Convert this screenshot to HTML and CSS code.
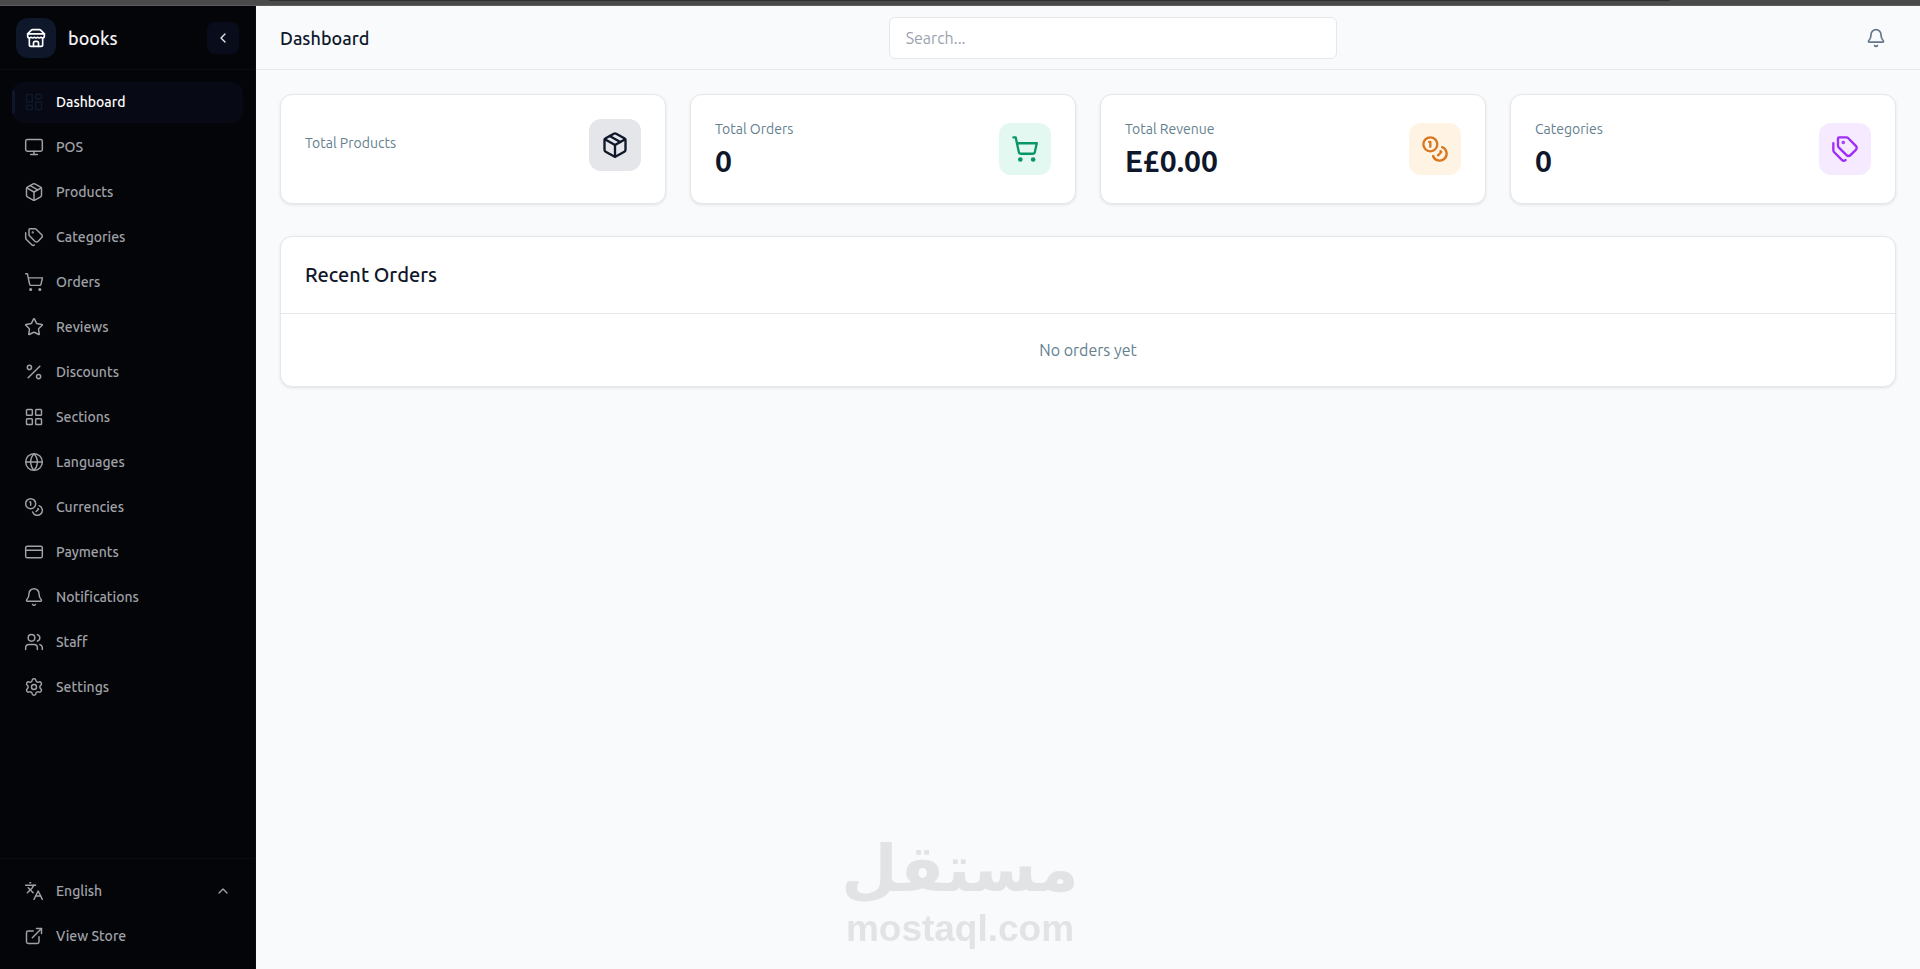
FILE: index.html
```html
<!DOCTYPE html>
<html lang="en">
<head>
    <meta charset="UTF-8">
    <meta name="viewport" content="width=device-width, initial-scale=1.0">
    <title>Dashboard - books</title>
    <link rel="stylesheet" href="styles.css">
</head>
<body>

    <!-- Shared icons -->
    <svg class="sprite" aria-hidden="true">
        <symbol id="box" viewBox="0 0 24 24"><path d="M11 21.73a2 2 0 0 0 2 0l7-4A2 2 0 0 0 21 16V8a2 2 0 0 0-1-1.73l-7-4a2 2 0 0 0-2 0l-7 4A2 2 0 0 0 3 8v8a2 2 0 0 0 1 1.73z"/><path d="M12 22V12"/><path d="M3.3 7 12 12l8.7-5"/><path d="m7.5 4.27 9 5.15"/></symbol>
        <symbol id="tags" viewBox="0 0 24 24"><path d="M13.172 2a2 2 0 0 1 1.414.586l6.71 6.71a2.4 2.4 0 0 1 0 3.408l-4.592 4.592a2.4 2.4 0 0 1-3.408 0l-6.71-6.71A2 2 0 0 1 6 9.172V3a1 1 0 0 1 1-1z"/><path d="M2 7v6.172a2 2 0 0 0 .586 1.414l6.71 6.71a2.4 2.4 0 0 0 3.191.193"/><circle cx="10.5" cy="6.5" r=".5" fill="currentColor"/></symbol>
        <symbol id="cart" viewBox="0 0 24 24"><circle cx="8" cy="21" r="1"/><circle cx="19" cy="21" r="1"/><path d="M2.05 2.05h2l2.66 12.42a2 2 0 0 0 2 1.58h9.78a2 2 0 0 0 1.95-1.57l1.65-7.43H5.12"/></symbol>
        <symbol id="coins" viewBox="0 0 24 24"><circle cx="8" cy="8" r="6"/><path d="M18.09 10.37A6 6 0 1 1 10.34 18"/><path d="M7 6h1v4"/><path d="m16.71 13.88.7.71-2.82 2.82"/></symbol>
        <symbol id="bell" viewBox="0 0 24 24"><path d="M10.268 21a2 2 0 0 0 3.464 0"/><path d="M3.262 15.326A1 1 0 0 0 4 17h16a1 1 0 0 0 .74-1.673C19.41 13.956 18 12.499 18 8A6 6 0 0 0 6 8c0 4.499-1.411 5.956-2.738 7.326"/></symbol>
    </svg>

    <div class="window-bar"><div class="window-line"></div></div>

    <div class="layout">
        <aside class="sidebar">
            <div class="brand">
                <span class="brand-logo">
                    <svg class="icon" viewBox="0 0 24 24"><path d="m2 7 4.41-4.41A2 2 0 0 1 7.83 2h8.34a2 2 0 0 1 1.42.59L22 7"/><path d="M4 12v8a2 2 0 0 0 2 2h12a2 2 0 0 0 2-2v-8"/><path d="M15 22v-4a2 2 0 0 0-2-2h-2a2 2 0 0 0-2 2v4"/><path d="M2 7h20"/><path d="M22 7v3a2 2 0 0 1-2 2a2.7 2.7 0 0 1-1.59-.63.7.7 0 0 0-.82 0A2.7 2.7 0 0 1 16 12a2.7 2.7 0 0 1-1.59-.63.7.7 0 0 0-.82 0A2.7 2.7 0 0 1 12 12a2.7 2.7 0 0 1-1.59-.63.7.7 0 0 0-.82 0A2.7 2.7 0 0 1 8 12a2.7 2.7 0 0 1-1.59-.63.7.7 0 0 0-.82 0A2.7 2.7 0 0 1 4 12a2 2 0 0 1-2-2V7"/></svg>
                </span>
                <span class="brand-name">books</span>
                <button class="collapse" aria-label="Collapse sidebar">
                    <svg class="icon icon-sm" viewBox="0 0 24 24"><path d="m15 18-6-6 6-6"/></svg>
                </button>
            </div>

            <nav class="nav">
                <a href="#" class="active">
                    <svg class="icon" viewBox="0 0 24 24"><rect x="3" y="3" width="7" height="9" rx="1"/><rect x="14" y="3" width="7" height="5" rx="1"/><rect x="14" y="12" width="7" height="9" rx="1"/><rect x="3" y="16" width="7" height="5" rx="1"/></svg>
                    Dashboard
                </a>
                <a href="#">
                    <svg class="icon" viewBox="0 0 24 24"><rect x="2" y="3" width="20" height="14" rx="2"/><path d="M8 21h8"/><path d="M12 17v4"/></svg>
                    POS
                </a>
                <a href="#"><svg class="icon"><use href="#box"/></svg>Products</a>
                <a href="#"><svg class="icon"><use href="#tags"/></svg>Categories</a>
                <a href="#"><svg class="icon"><use href="#cart"/></svg>Orders</a>
                <a href="#">
                    <svg class="icon" viewBox="0 0 24 24"><path d="M11.525 2.295a.53.53 0 0 1 .95 0l2.31 4.679a2.123 2.123 0 0 0 1.595 1.16l5.166.756a.53.53 0 0 1 .294.904l-3.736 3.638a2.123 2.123 0 0 0-.611 1.878l.882 5.14a.53.53 0 0 1-.771.56l-4.618-2.428a2.122 2.122 0 0 0-1.973 0L6.396 21.01a.53.53 0 0 1-.77-.56l.881-5.139a2.122 2.122 0 0 0-.611-1.879L2.16 9.795a.53.53 0 0 1 .294-.906l5.165-.755a2.122 2.122 0 0 0 1.597-1.16z"/></svg>
                    Reviews
                </a>
                <a href="#">
                    <svg class="icon" viewBox="0 0 24 24"><path d="M19 5 5 19"/><circle cx="6.5" cy="6.5" r="2.5"/><circle cx="17.5" cy="17.5" r="2.5"/></svg>
                    Discounts
                </a>
                <a href="#">
                    <svg class="icon" viewBox="0 0 24 24"><rect x="3" y="3" width="7" height="7" rx="1"/><rect x="14" y="3" width="7" height="7" rx="1"/><rect x="14" y="14" width="7" height="7" rx="1"/><rect x="3" y="14" width="7" height="7" rx="1"/></svg>
                    Sections
                </a>
                <a href="#">
                    <svg class="icon" viewBox="0 0 24 24"><circle cx="12" cy="12" r="10"/><path d="M12 2a14.5 14.5 0 0 0 0 20 14.5 14.5 0 0 0 0-20"/><path d="M2 12h20"/></svg>
                    Languages
                </a>
                <a href="#"><svg class="icon"><use href="#coins"/></svg>Currencies</a>
                <a href="#">
                    <svg class="icon" viewBox="0 0 24 24"><rect x="2" y="5" width="20" height="14" rx="2"/><path d="M2 10h20"/></svg>
                    Payments
                </a>
                <a href="#"><svg class="icon"><use href="#bell"/></svg>Notifications</a>
                <a href="#">
                    <svg class="icon" viewBox="0 0 24 24"><path d="M16 21v-2a4 4 0 0 0-4-4H6a4 4 0 0 0-4 4v2"/><circle cx="9" cy="7" r="4"/><path d="M22 21v-2a4 4 0 0 0-3-3.87"/><path d="M16 3.13a4 4 0 0 1 0 7.75"/></svg>
                    Staff
                </a>
                <a href="#">
                    <svg class="icon" viewBox="0 0 24 24"><path d="M9.671 4.136a2.34 2.34 0 0 1 4.659 0 2.34 2.34 0 0 0 3.319 1.915 2.34 2.34 0 0 1 2.33 4.033 2.34 2.34 0 0 0 0 3.831 2.34 2.34 0 0 1-2.33 4.033 2.34 2.34 0 0 0-3.319 1.915 2.34 2.34 0 0 1-4.659 0 2.34 2.34 0 0 0-3.32-1.915 2.34 2.34 0 0 1-2.33-4.033 2.34 2.34 0 0 0 0-3.831A2.34 2.34 0 0 1 6.35 6.051a2.34 2.34 0 0 0 3.319-1.915"/><circle cx="12" cy="12" r="3"/></svg>
                    Settings
                </a>
            </nav>

            <div class="nav nav-bottom">
                <button>
                    <svg class="icon" viewBox="0 0 24 24"><path d="m5 8 6 6"/><path d="m4 14 6-6 2-3"/><path d="M2 5h12"/><path d="M7 2h1"/><path d="m22 22-5-10-5 10"/><path d="M14 18h6"/></svg>
                    English
                    <svg class="icon icon-sm chevron" viewBox="0 0 24 24"><path d="m18 15-6-6-6 6"/></svg>
                </button>
                <a href="#">
                    <svg class="icon" viewBox="0 0 24 24"><path d="M15 3h6v6"/><path d="M10 14 21 3"/><path d="M18 13v6a2 2 0 0 1-2 2H5a2 2 0 0 1-2-2V8a2 2 0 0 1 2-2h6"/></svg>
                    View Store
                </a>
            </div>
        </aside>

        <div class="page">
            <header class="topbar">
                <h1>Dashboard</h1>
                <input type="search" class="search" placeholder="Search..." aria-label="Search">
                <button class="bell" aria-label="Notifications">
                    <svg class="icon"><use href="#bell"/></svg>
                </button>
            </header>

            <main class="content">
                <section class="stats">
                    <div class="card stat">
                        <div>
                            <p class="label">Total Products</p>
                        </div>
                        <span class="stat-icon dark"><svg class="icon"><use href="#box"/></svg></span>
                    </div>
                    <div class="card stat">
                        <div>
                            <p class="label">Total Orders</p>
                            <p class="value">0</p>
                        </div>
                        <span class="stat-icon green"><svg class="icon"><use href="#cart"/></svg></span>
                    </div>
                    <div class="card stat">
                        <div>
                            <p class="label">Total Revenue</p>
                            <p class="value">E£0.00</p>
                        </div>
                        <span class="stat-icon orange"><svg class="icon"><use href="#coins"/></svg></span>
                    </div>
                    <div class="card stat">
                        <div>
                            <p class="label">Categories</p>
                            <p class="value">0</p>
                        </div>
                        <span class="stat-icon purple"><svg class="icon"><use href="#tags"/></svg></span>
                    </div>
                </section>

                <section class="card orders">
                    <h2>Recent Orders</h2>
                    <p class="empty">No orders yet</p>
                </section>
            </main>
        </div>
    </div>

    <!-- Watermark over the page -->
    <div class="watermark">
        <span class="watermark-ar" lang="ar" dir="rtl">مستقل</span>
        <span class="watermark-en">mostaql.com</span>
    </div>

</body>
</html>
```
FILE: styles.css
```css
* {
    box-sizing: border-box;
}
body {
    margin: 0;
    min-height: 100vh;
    display: flex;
    flex-direction: column;
    background: #f9fafc;
    color: #0f172a;
    font-family: Ubuntu, "Open Sans", "Noto Sans", sans-serif;
    font-size: 16px;
    line-height: 24px;
}
h1, h2, p {
    margin: 0;
}
button {
    font: inherit;
    border: none;
    cursor: pointer;
}
.sprite {
    display: none;
}
.icon {
    width: 20px;
    height: 20px;
    flex-shrink: 0;
    fill: none;
    stroke: currentColor;
    stroke-width: 2;
    stroke-linecap: round;
    stroke-linejoin: round;
}
.icon-sm {
    width: 16px;
    height: 16px;
}
.window-bar {
    height: 6px;
    background: #4a4a4a;
    border-bottom: 1px solid #5c5c5c;
}
.window-line {
    height: 1px;
    width: 73%;
    margin-left: 14%;
    background: #303030;
}
.layout {
    flex: 1;
    display: flex;
}

/* Sidebar */
.sidebar {
    width: 256px;
    flex-shrink: 0;
    display: flex;
    flex-direction: column;
    background: #040509;
    border-right: 1px solid #0a0c14;
    color: #a0a2a8;
}
.brand {
    height: 64px;
    display: flex;
    align-items: center;
    gap: 12px;
    padding: 0 16px;
    border-bottom: 1px solid #0a0c14;
}
.brand-logo {
    width: 40px;
    height: 40px;
    display: flex;
    align-items: center;
    justify-content: center;
    background: #0f172a;
    color: white;
    border-radius: 12px;
}
.brand-name {
    flex: 1;
    color: #f1f2f4;
    font-size: 18px;
    font-weight: 550;
}
.collapse {
    width: 32px;
    height: 32px;
    display: flex;
    align-items: center;
    justify-content: center;
    padding: 0;
    background: #090d1b;
    color: #e5e7eb;
    border-radius: 8px;
}
.nav {
    flex: 1;
    display: flex;
    flex-direction: column;
    gap: 4px;
    padding: 12px;
}
.nav a,
.nav button {
    position: relative;
    display: flex;
    align-items: center;
    gap: 12px;
    padding: 10px 12px 11px;
    background: none;
    color: inherit;
    border-radius: 12px;
    font-size: 14px;
    font-weight: 500;
    line-height: 20px;
    text-decoration: none;
}
.nav .icon {
    stroke-width: 1.75;
}
.nav a.active {
    background: #070a14;
    color: white;
}
.nav a.active::before {
    content: "";
    position: absolute;
    left: 0;
    width: 3px;
    height: 24px;
    background: #0f172a;
    border-radius: 0 3px 3px 0;
}
.nav a.active .icon {
    color: #0f172a;
}
.nav-bottom {
    flex: none;
    border-top: 1px solid #0a0c14;
}
.nav .chevron {
    margin-left: auto;
    stroke-width: 2;
}

/* Header */
.page {
    flex: 1;
    min-width: 0;
}
.topbar {
    height: 64px;
    display: flex;
    align-items: center;
    justify-content: space-between;
    gap: 16px;
    padding: 0 24px;
    border-bottom: 1px solid #e5e7eb;
}
.topbar h1 {
    font-size: 18px;
    font-weight: 550;
    line-height: 24px;
}
.search {
    flex: 1;
    max-width: 448px;
    height: 42px;
    padding: 0 16px;
    background: white;
    border: 1px solid #e5e7eb;
    border-radius: 6px;
    font: inherit;
}
.search::placeholder {
    color: #9ca3af;
}
.bell {
    display: flex;
    padding: 10px;
    background: none;
    color: #64748b;
}

/* Content */
.content {
    display: flex;
    flex-direction: column;
    gap: 32px;
    padding: 24px;
}
.stats {
    display: grid;
    grid-template-columns: repeat(4, 1fr);
    gap: 24px;
}
.card {
    background: white;
    border: 1px solid #e5e7eb;
    border-radius: 12px;
    box-shadow: 0 1px 3px rgba(0, 0, 0, 0.1);
}
.stat {
    display: flex;
    align-items: center;
    justify-content: space-between;
    align-content: flex-start;
    flex-wrap: wrap;
    padding: 24px;
}
.label {
    margin-bottom: 4px;
    color: #64808f;
    font-size: 14px;
    line-height: 20px;
}
.value {
    font-size: 30px;
    font-weight: 700;
    line-height: 36px;
}
.stat-icon {
    display: flex;
    padding: 12px;
    border-radius: 12px;
}
.stat-icon .icon {
    width: 28px;
    height: 28px;
}
.dark {
    background: #e5e6e9;
    color: #0f172a;
}
.green {
    background: #e3f8f1;
    color: #099669;
}
.orange {
    background: #fff4e3;
    color: #d97720;
}
.purple {
    background: #f5eaff;
    color: #9f2cf8;
}
.orders h2 {
    padding: 24px;
    border-bottom: 1px solid #e5e7eb;
    font-size: 20px;
    font-weight: 550;
    line-height: 28px;
}
.empty {
    padding: 24px;
    color: #64808f;
    text-align: center;
}

/* Watermark */
.watermark {
    position: fixed;
    left: 0;
    right: 0;
    bottom: 18px;
    display: flex;
    flex-direction: column;
    align-items: center;
    color: #e2e3e5;
    font-weight: 700;
    pointer-events: none;
}
.watermark-ar {
    font-family: "DejaVu Sans", sans-serif;
    font-size: 65px;
    line-height: 76px;
}
.watermark-en {
    font-family: "Liberation Sans", sans-serif;
    font-size: 37px;
    line-height: 44px;
}
```
